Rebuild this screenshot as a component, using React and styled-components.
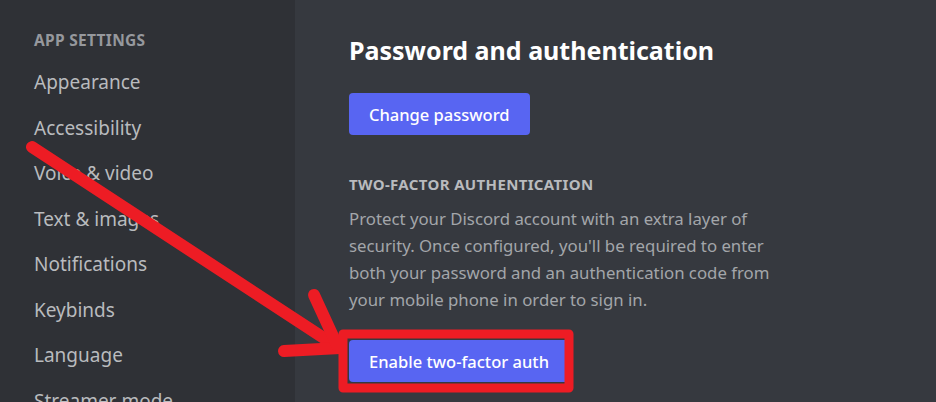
import React from "react";
import styled, { createGlobalStyle } from "styled-components";

const GlobalStyle = createGlobalStyle`
  html, body {
    margin: 0;
    padding: 0;
    background: #36393f;
    overflow: hidden;
  }
  * {
    box-sizing: border-box;
  }
`;

const Page = styled.div`
  position: relative;
  display: flex;
  width: 936px;
  height: 402px;
  overflow: hidden;
  font-family: "Noto Sans", "Open Sans", sans-serif;
  background: #36393f;
`;

const Sidebar = styled.nav`
  width: 295px;
  flex-shrink: 0;
  background: #2f3136;
  padding: 9px 32px 0 34px;
  display: flex;
  flex-direction: column;
`;

const Divider = styled.div`
  height: 2px;
  background: #393c42;
  margin-bottom: 20px;
`;

const SideHeader = styled.div`
  font-size: 15.5px;
  font-weight: 700;
  color: #96989d;
  letter-spacing: 0.3px;
  text-transform: uppercase;
  height: 22px;
  line-height: 22px;
  margin-bottom: 9px;
`;

const SideItem = styled.div`
  font-size: 19px;
  color: #b9bbbe;
  height: 45.5px;
  line-height: 45.5px;
  white-space: nowrap;
`;

const Content = styled.main`
  flex: 1;
  padding: 33px 0 0 54px;
  display: flex;
  flex-direction: column;
  align-items: flex-start;
`;

const Title = styled.h1`
  margin: 0 0 26px;
  font-size: 25px;
  line-height: 34px;
  font-weight: 700;
  color: #ffffff;
`;

const Button = styled.button`
  border: none;
  border-radius: 4px;
  background: #5865f2;
  color: #ffffff;
  font-family: inherit;
  font-size: 16.5px;
  font-weight: 500;
  height: 42px;
  padding: 0 ${(p) => p.$pad || 20}px;
  cursor: pointer;
`;

const SectionTitle = styled.h2`
  margin: 38px 0 10px;
  font-size: 15px;
  line-height: 22px;
  font-weight: 700;
  letter-spacing: 0.35px;
  color: #b9bbbe;
  text-transform: uppercase;
`;

const Paragraph = styled.p`
  margin: 0 0 27px;
  font-size: 16.8px;
  line-height: 27px;
  color: #a3a6aa;
  white-space: nowrap;
`;

const Overlay = styled.svg`
  position: absolute;
  left: 0;
  top: 0;
  pointer-events: none;
`;

const items = [
  "Appearance",
  "Accessibility",
  "Voice & video",
  "Text & images",
  "Notifications",
  "Keybinds",
  "Language",
  "Streamer mode",
];

export default function App() {
  return (
    <Page>
      <GlobalStyle />
      <Sidebar>
        <Divider />
        <SideHeader>App Settings</SideHeader>
        {items.map((item) => (
          <SideItem key={item}>{item}</SideItem>
        ))}
      </Sidebar>
      <Content>
        <Title>Password and authentication</Title>
        <Button>Change password</Button>
        <SectionTitle>Two-factor authentication</SectionTitle>
        <Paragraph>
          Protect your Discord account with an extra layer of
          <br />
          security. Once configured, you'll be required to enter
          <br />
          both your password and an authentication code from
          <br />
          your mobile phone in order to sign in.
        </Paragraph>
        <Button $pad={20}>Enable two-factor auth</Button>
      </Content>
      <Overlay width="936" height="402" viewBox="0 0 936 402">
        <g stroke="#ed1c24" fill="none" strokeLinecap="round" strokeLinejoin="round">
          <line x1="32" y1="147" x2="336" y2="346" strokeWidth="12" />
          <line x1="284" y1="351" x2="340" y2="348" strokeWidth="12" />
          <line x1="314" y1="295" x2="337" y2="345" strokeWidth="12" />
          <rect x="343" y="334" width="226" height="54" strokeWidth="9" strokeLinecap="butt" />
        </g>
      </Overlay>
    </Page>
  );
}
